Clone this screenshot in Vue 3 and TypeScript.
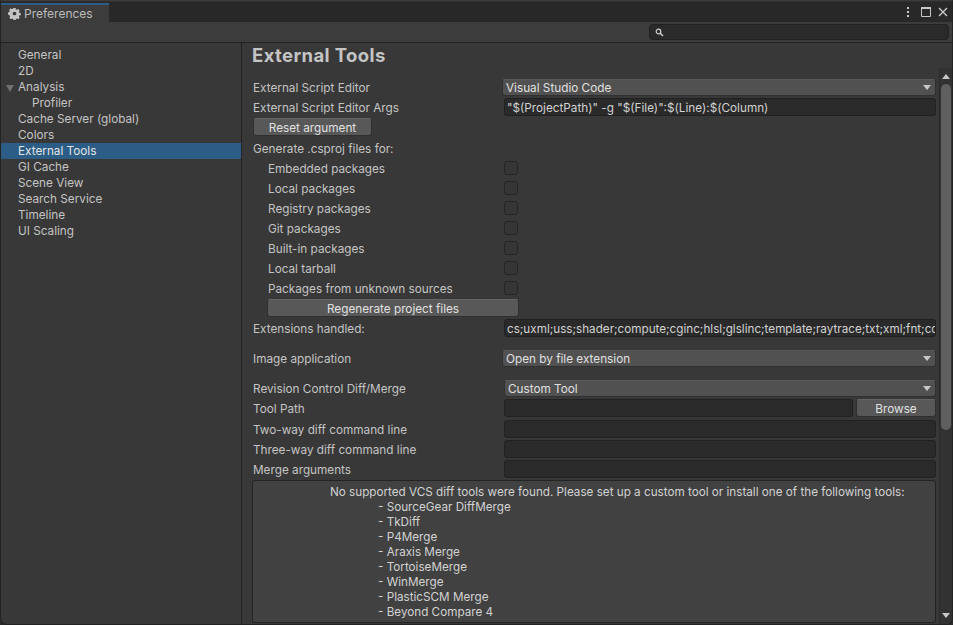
<script setup lang="ts">
const navItems = [
  { label: 'General' },
  { label: '2D' },
  { label: 'Analysis', arrow: true },
  { label: 'Profiler', child: true },
  { label: 'Cache Server (global)' },
  { label: 'Colors' },
  { label: 'External Tools', active: true },
  { label: 'GI Cache' },
  { label: 'Scene View' },
  { label: 'Search Service' },
  { label: 'Timeline' },
  { label: 'UI Scaling' },
]
const packages = [
  'Embedded packages',
  'Local packages',
  'Registry packages',
  'Git packages',
  'Built-in packages',
  'Local tarball',
  'Packages from unknown sources',
]
const tools = [
  'SourceGear DiffMerge',
  'TkDiff',
  'P4Merge',
  'Araxis Merge',
  'TortoiseMerge',
  'WinMerge',
  'PlasticSCM Merge',
  'Beyond Compare 4',
]
</script>

<template>
  <div class="window">
    <header class="tabbar">
      <div class="tab">
        <svg class="gear" width="13" height="13" viewBox="0 0 14 14">
          <path fill="#c4c4c4" fill-rule="evenodd" d="M5.8 1h2.4l.3 1.6 1 .4 1.4-.9 1.7 1.7-.9 1.4.4 1 1.6.3v2.4l-1.6.3-.4 1 .9 1.4-1.7 1.7-1.4-.9-1 .4-.3 1.6H5.8l-.3-1.6-1-.4-1.4.9-1.7-1.7.9-1.4-.4-1L0 8.2V5.8l1.6-.3.4-1-.9-1.4 1.7-1.7 1.4.9 1-.4zM7 5a2 2 0 1 0 0 4 2 2 0 0 0 0-4z" />
        </svg>
        <span>Preferences</span>
      </div>
      <div class="window-actions">
        <svg class="dots" width="4" height="12" viewBox="0 0 4 12"><g fill="#c8c8c8"><rect x="1" y="1" width="2" height="2" /><rect x="1" y="5" width="2" height="2" /><rect x="1" y="9" width="2" height="2" /></g></svg>
        <svg class="maximize" width="10" height="10" viewBox="0 0 10 10"><path fill="none" stroke="#c8c8c8" d="M.5.5h9v9H.5z" /><rect x="0" y="0" width="10" height="2" fill="#c8c8c8" /></svg>
        <svg width="10" height="10" viewBox="0 0 10 10"><path stroke="#c8c8c8" stroke-width="1.400" d="M1 1l8 8M9 1l-8 8" /></svg>
      </div>
    </header>

    <div class="toolbar">
      <div class="search">
        <svg width="9" height="9" viewBox="0 0 9 9"><circle cx="3.500" cy="3.500" r="2.300" fill="none" stroke="#d0d0d0" stroke-width="1.200" /><path d="M5.300 5.300 8 8" stroke="#d0d0d0" stroke-width="1.500" /></svg>
      </div>
    </div>

    <div class="body">
      <nav class="sidebar">
        <div
          v-for="item in navItems"
          :key="item.label"
          class="nav-item"
          :class="{ active: item.active, child: item.child }"
        >
          <span v-if="item.arrow" class="nav-arrow"></span>
          {{ item.label }}
        </div>
      </nav>

      <main class="content">
        <h1 class="title">External Tools</h1>
        <div class="scroll-area">
          <div class="form">
            <div class="row">
              <span class="label">External Script Editor</span>
              <div class="select wide-select"><span>Visual Studio Code</span><i class="caret"></i></div>
            </div>
            <div class="row">
              <span class="label">External Script Editor Args</span>
              <div class="input">"$(ProjectPath)" -g "$(File)":$(Line):$(Column)</div>
            </div>
            <div class="row">
              <button class="btn reset">Reset argument</button>
            </div>
            <div class="row gen-row"><span class="label">Generate .csproj files for:</span></div>
            <div v-for="pkg in packages" :key="pkg" class="row indented">
              <span class="label">{{ pkg }}</span>
              <span class="check"></span>
            </div>
            <div class="row">
              <button class="btn regen">Regenerate project files</button>
            </div>
            <div class="row">
              <span class="label">Extensions handled:</span>
              <div class="input ext">cs;uxml;uss;shader;compute;cginc;hlsl;glslinc;template;raytrace;txt;xml;fnt;cd</div>
            </div>
            <div class="row gap-before">
              <span class="label">Image application</span>
              <div class="select wide-select"><span>Open by file extension</span><i class="caret"></i></div>
            </div>
            <div class="row gap-before">
              <span class="label">Revision Control Diff/Merge</span>
              <div class="select"><span>Custom Tool</span><i class="caret"></i></div>
            </div>
            <div class="row tool-row">
              <span class="label">Tool Path</span>
              <div class="input"></div>
              <button class="btn browse">Browse</button>
            </div>
            <div class="row"><span class="label">Two-way diff command line</span><div class="input"></div></div>
            <div class="row"><span class="label">Three-way diff command line</span><div class="input"></div></div>
            <div class="row"><span class="label">Merge arguments</span><div class="input"></div></div>
            <div class="helpbox">
              <p class="help-head">No supported VCS diff tools were found. Please set up a custom tool or install one of the following tools:</p>
              <p v-for="tool in tools" :key="tool" class="help-item">- {{ tool }}</p>
            </div>
          </div>
          <div class="scrollbar">
            <i class="sb-up"></i>
            <div class="thumb"></div>
            <i class="sb-down"></i>
          </div>
        </div>
      </main>
    </div>
  </div>
</template>

<style>
html, body { margin: 0; background: #2b2b2b; }
</style>

<style scoped>
.window {
  width: 953px;
  height: 625px;
  box-sizing: border-box;
  display: flex;
  flex-direction: column;
  overflow: hidden;
  background: #383838;
  border: 1px solid #232323;
  border-top-color: #3f3a35;
  border-radius: 0 0 7px 7px;
  font-family: Inter, "Noto Sans", sans-serif;
  font-size: 11.750px;
  line-height: 16px;
  color: #c4c4c4;
}
.tabbar {
  height: 21px;
  flex: none;
  display: flex;
  justify-content: space-between;
  background: #282828;
  border-top: 1px solid #2f2f2f;
  box-sizing: border-box;
}
.tab {
  width: 108px;
  height: 19px;
  margin-top: 1px;
  box-sizing: border-box;
  display: flex;
  align-items: center;
  gap: 3px;
  padding-left: 7px;
  background: #3c3c3c;
  border-top: 2px solid #2c5d87;
  font-size: 12px;
  color: #bdbdbd;
}
.gear { flex: none; }
.window-actions {
  display: flex;
  align-items: center;
  padding-right: 4px;
  padding-bottom: 1px;
  gap: 7px;
}
.dots { margin-right: 4px; }
.toolbar {
  height: 21px;
  flex: none;
  display: flex;
  justify-content: flex-end;
  align-items: center;
  box-sizing: border-box;
  padding-right: 3px;
  background: #3c3c3c;
  border-bottom: 1px solid #232323;
}
.search {
  width: 300px;
  height: 16px;
  box-sizing: border-box;
  display: flex;
  align-items: center;
  padding-left: 5px;
  background: #2a2a2a;
  border: 1px solid #212121;
  border-radius: 4px;
}
.body {
  flex: 1;
  min-height: 0;
  display: flex;
}
.sidebar {
  width: 241px;
  flex: none;
  box-sizing: border-box;
  padding-top: 4px;
  border-right: 1px solid #232323;
}
.nav-item {
  position: relative;
  height: 16px;
  padding-left: 17px;
  color: #c4c4c4;
}
.nav-item.child { padding-left: 31px; }
.nav-item.active { background: #2c5d87; color: #e4e4e4; }
.nav-arrow {
  position: absolute;
  left: 5px;
  top: 6px;
  border-left: 4px solid transparent;
  border-right: 4px solid transparent;
  border-top: 7px solid #707070;
}
.content {
  flex: 1;
  min-width: 0;
  display: flex;
  flex-direction: column;
}
.title {
  margin: 0;
  height: 29px;
  padding-left: 10px;
  font-size: 18.500px;
  line-height: 25px;
  letter-spacing: 0.4px;
  font-weight: 700;
  color: #c4c4c4;
}
.scroll-area {
  flex: 1;
  min-height: 0;
  display: flex;
}
.form {
  flex: 1;
  min-width: 0;
  padding: 5px 3px 0 11px;
}
.row {
  height: 20px;
  display: flex;
  align-items: center;
}
.label {
  width: 251px;
  flex: none;
  margin-top: 2px;
  white-space: nowrap;
}
.indented { padding-left: 15px; }
.indented .label { width: 236px; }
.gen-row { margin-top: 1px; }
.gap-before { margin-top: 10px; }
.tool-row { margin-bottom: 1px; }
.select {
  flex: 1;
  min-width: 0;
  height: 17px;
  display: flex;
  align-items: center;
  justify-content: space-between;
  box-sizing: border-box;
  padding: 1px 4px 0 3px;
  background: #515151;
  border: 1px solid #303030;
  border-top-color: #585858;
  border-radius: 3px;
  color: #e0e0e0;
  white-space: nowrap;
}
.wide-select { margin-left: -2px; }
.caret {
  width: 0;
  height: 0;
  border-left: 4px solid transparent;
  border-right: 4px solid transparent;
  border-top: 5px solid #c8c8c8;
}
.input {
  flex: 1;
  min-width: 0;
  height: 18px;
  box-sizing: border-box;
  padding: 1px 0 0 2px;
  overflow: hidden;
  white-space: nowrap;
  background: #2a2a2a;
  border: 1px solid #212121;
  border-radius: 3px;
  color: #d2d2d2;
}
.ext { font-size: 11.700px; }
.btn {
  height: 18px;
  box-sizing: border-box;
  padding: 1px 0 0;
  font: inherit;
  color: #e0e0e0;
  background: #585858;
  border: 1px solid #303030;
  border-top-color: #656565;
  border-radius: 3px;
}
.reset { width: 119px; }
.regen { width: 252px; margin-left: 14px; }
.browse { width: 80px; margin-left: 3px; flex: none; }
.check {
  width: 14px;
  height: 14px;
  box-sizing: border-box;
  background: #353535;
  border: 1px solid #262626;
  border-radius: 3px;
}
.helpbox {
  height: 143px;
  margin: 1px 0 0 -1px;
  box-sizing: border-box;
  overflow: hidden;
  padding-top: 3px;
  background: #414141;
  border: 1px solid #232323;
  border-radius: 3px;
  color: #d2d2d2;
  font-size: 11.700px;
}
.helpbox p {
  margin: 0;
  height: 15px;
  line-height: 16px;
  white-space: nowrap;
}
.help-head { padding-left: 77px; }
.help-item { padding-left: 125px; }
.scrollbar {
  position: relative;
  width: 13px;
  flex: none;
  background: #323232;
  border-left: 1px solid #2b2b2b;
  box-sizing: border-box;
  margin-top: -4px;
}
.thumb {
  position: absolute;
  top: 16px;
  left: 1px;
  width: 10px;
  height: 346px;
  background: #5f5f5f;
  border-radius: 5px;
}
.sb-up, .sb-down {
  position: absolute;
  left: 2px;
  width: 0;
  height: 0;
  border-left: 4px solid transparent;
  border-right: 4px solid transparent;
}
.sb-up { top: 6px; border-bottom: 5px solid #c8c8c8; }
.sb-down { bottom: 6px; border-top: 5px solid #c8c8c8; }
</style>
